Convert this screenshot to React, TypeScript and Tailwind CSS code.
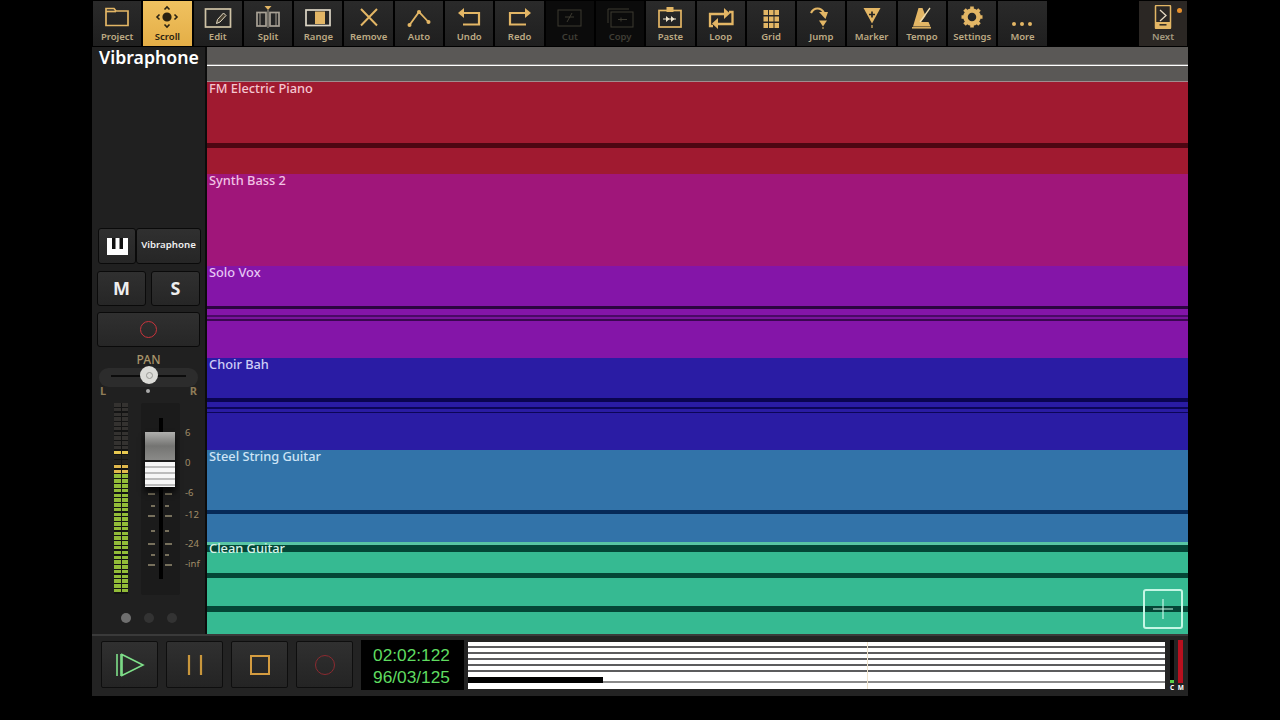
import React from 'react';

const GOLD = '#e3b665';

type Stripe = [number, string];

const tracks: { name: string; text: string; stripes: Stripe[] }[] = [
  {
    name: 'FM Electric Piano',
    text: 'text-[#f4c6d0]',
    stripes: [[61, '#a01a30'], [5, '#4d0612'], [26, '#a01a30']],
  },
  {
    name: 'Synth Bass 2',
    text: 'text-[#f2c2e4]',
    stripes: [[92, '#a0167a']],
  },
  {
    name: 'Solo Vox',
    text: 'text-[#e6c6f4]',
    stripes: [[40, '#8415a8'], [3, '#2c0540'], [6, '#8415a8'], [2, '#4a0a66'], [2, '#7a139c'], [2, '#3a0750'], [37, '#8415a8']],
  },
  {
    name: 'Choir Bah',
    text: 'text-[#cfcdf6]',
    stripes: [[40, '#2a1ca4'], [4, '#0a0450'], [5, '#2a1ca4'], [2, '#0c0658'], [3, '#2a1ca4'], [1, '#0c0658'], [37, '#2a1ca4']],
  },
  {
    name: 'Steel String Guitar',
    text: 'text-[#cde4f6]',
    stripes: [[60, '#3273a9'], [4, '#062a58'], [28, '#3273a9']],
  },
  {
    name: 'Clean Guitar',
    text: 'text-[#d8f4ea]',
    stripes: [[3, '#58c6a4'], [7, '#044636'], [21, '#36ba92'], [5, '#044636'], [28, '#36ba92'], [6, '#044636'], [22, '#36ba92']],
  },
];

function Svg({ children }: { children: React.ReactNode }) {
  return (
    <svg width="28" height="24" viewBox="0 0 28 24" fill="none" stroke={GOLD} strokeWidth="1.7">
      {children}
    </svg>
  );
}

const icons: Record<string, React.ReactNode> = {
  Project: (
    <Svg>
      <path d="M3 3.500h8l2 2.500h12v14.500H3z" />
      <path d="M3 6.500h10" />
    </Svg>
  ),
  Scroll: (
    <svg width="28" height="24" viewBox="0 0 28 24" fill="none" stroke="#2a2312" strokeWidth="1.6">
      <circle cx="14" cy="12" r="3.800" fill="#2a2312" />
      <path d="M11.500 4.500 14 2l2.500 2.500M11.500 19.500 14 22l2.500-2.500M6.500 9.500 4 12l2.500 2.500M21.500 9.500 24 12l-2.500 2.500" />
    </svg>
  ),
  Edit: (
    <Svg>
      <rect x="1.500" y="4" width="25" height="18" stroke="#cfc3a6" />
      <path d="m12.500 18.500 1-4 6-6.500 2.500 2.500-6 6.500z" stroke="#e6dcc4" strokeWidth="1" fill="#4a4232" />
    </Svg>
  ),
  Split: (
    <Svg>
      <path d="M10.500 1h7L14 5z" fill={GOLD} stroke="none" />
      <path d="M14 5v18" stroke="#9a9488" strokeWidth="1.200" />
      <rect x="3" y="7.500" width="9" height="13.500" stroke="#a9a296" />
      <rect x="16" y="7.500" width="9" height="13.500" stroke="#a9a296" />
      <path d="M6 7.500v13.500M22 7.500v13.500" stroke="#a9a296" strokeWidth="1" />
    </Svg>
  ),
  Range: (
    <Svg>
      <rect x="2" y="5" width="24" height="15.500" stroke="#ddd6c6" />
      <rect x="11" y="6.500" width="10" height="12.500" fill={GOLD} stroke="none" />
    </Svg>
  ),
  Remove: (
    <Svg>
      <path d="m6 4 16 16.500M22 4 6 20.500" strokeWidth="2" />
    </Svg>
  ),
  Auto: (
    <Svg>
      <path d="M4.500 20 14 7l9.500 10" strokeWidth="1.800" />
      <circle cx="4.500" cy="20" r="2" fill={GOLD} stroke="none" />
      <circle cx="14" cy="7" r="2" fill={GOLD} stroke="none" />
      <circle cx="23.500" cy="17" r="2" fill={GOLD} stroke="none" />
    </Svg>
  ),
  Undo: (
    <Svg>
      <path d="M9 3 3 8 9 13z" fill={GOLD} stroke="none" />
      <path d="M7 8h17v11.500H8" strokeWidth="2.200" />
    </Svg>
  ),
  Redo: (
    <Svg>
      <path d="m19 3 6 5-6 5z" fill={GOLD} stroke="none" />
      <path d="M21 8H4v11.500h16" strokeWidth="2.200" />
    </Svg>
  ),
  Cut: (
    <svg width="28" height="24" viewBox="0 0 28 24" fill="none" stroke="#3c3a30" strokeWidth="1">
      <rect x="2" y="5" width="23" height="16" />
      <path d="m16 8-5 9M9 12h9" />
    </svg>
  ),
  Copy: (
    <svg width="28" height="24" viewBox="0 0 28 24" fill="none" stroke="#3c3a30" strokeWidth="1">
      <path d="M2 18V4h21" />
      <rect x="5" y="7" width="22" height="15" />
      <path d="M12 14.500h9M15 12.500v4" />
    </svg>
  ),
  Paste: (
    <Svg>
      <rect x="3" y="5.500" width="22" height="16.500" />
      <rect x="10.500" y="2" width="7" height="5" fill={GOLD} stroke="none" />
      <path d="M7 14h13" strokeWidth="1" stroke="#f0e4cc" />
      <path d="m10 11 3.500 3L10 17zM15 11l3.500 3-3.500 3z" fill="#f0e4cc" stroke="none" />
    </Svg>
  ),
  Loop: (
    <Svg>
      <path d="M6 21H3V9h15" strokeWidth="2.300" />
      <path d="M22 7h3.500v12H9" strokeWidth="2.300" />
      <path d="m17 3 6 5.500-6 5.500zM11 13l-6 5.500 6 5.500z" fill={GOLD} stroke="none" />
    </Svg>
  ),
  Grid: (
    <svg width="28" height="24" viewBox="0 0 28 24" fill={GOLD}>
      {[5, 11.500, 18].map((y) =>
        [6.500, 12, 17.500].map((x) => <rect key={`${x}-${y}`} x={x} y={y} width="4.500" height="5" />),
      )}
    </svg>
  ),
  Jump: (
    <Svg>
      <path d="M4 8c3-6 10-6 13 0" strokeWidth="2.200" />
      <path d="m12 7 9 0-2.500 7z" fill={GOLD} stroke="none" />
      <path d="M12 15.500h8L16 21.500z" fill={GOLD} stroke="none" />
      <path d="M16 22v2" strokeWidth="1" />
    </Svg>
  ),
  Marker: (
    <Svg>
      <path d="M5.500 3h17L14 18.500z" fill={GOLD} stroke="none" />
      <path d="M14 6.500v6M11 9.500h6" stroke="#242424" strokeWidth="1.700" />
      <path d="M14 20v3" strokeWidth="1.200" />
    </Svg>
  ),
  Tempo: (
    <Svg>
      <path d="M5 21.500 10.500 3h4l3 8-4.500 6h7.500l2 4.500z" fill={GOLD} stroke="none" />
      <path d="m12 17 10-14" strokeWidth="1.300" stroke="#f0dcae" />
      <path d="M4 22.800h19" strokeWidth="1.500" />
    </Svg>
  ),
  Settings: (
    <Svg>
      <circle cx="14" cy="12" r="6.500" stroke={GOLD} strokeWidth="4.500" />
      <path
        d="M14 1.500v4M14 18.500v4M3.500 12h4M20.500 12h4M6.500 4.500l3 3M18.500 16.500l3 3M21.500 4.500l-3 3M9.500 16.500l-3 3"
        strokeWidth="3.600"
      />
    </Svg>
  ),
  More: (
    <svg width="28" height="24" viewBox="0 0 28 24" fill={GOLD}>
      <circle cx="6" cy="19" r="2" />
      <circle cx="14" cy="19" r="2" />
      <circle cx="22" cy="19" r="2" />
    </svg>
  ),
  Next: (
    <svg width="28" height="24" viewBox="0 0 28 24" fill="none" stroke={GOLD} strokeWidth="1.500">
      <rect x="6.500" y="0.500" width="15" height="23" rx="1" />
      <rect x="6.500" y="17" width="15" height="6.500" fill={GOLD} stroke="none" />
      <path d="M10.500 19.800h7" stroke="#2a2622" strokeWidth="1.500" />
      <path d="m11 5 6 5.500-6 5.500" stroke="#e6d9c2" strokeWidth="1.300" />
    </svg>
  ),
};

function ToolButton({ label, active, off }: { label: string; active?: boolean; off?: boolean }) {
  const look = active
    ? 'bg-gradient-to-b from-[#f0c260] to-[#e4ae46] text-[#2a2312]'
    : off
      ? 'bg-[#0b0b0b] text-[#3f3d35]'
      : 'bg-gradient-to-b from-[#2a2a2a] to-[#1f1f1f] text-[#bdaa84]';
  return (
    <div className={`flex h-[45px] w-[48.300px] shrink-0 flex-col items-center pt-[4px] ${look}`}>
      {icons[label]}
      <span className="mt-[1px] text-[9.500px] leading-[14px] font-semibold">{label}</span>
    </div>
  );
}

function Toolbar() {
  const names = ['Project', 'Scroll', 'Edit', 'Split', 'Range', 'Remove', 'Auto', 'Undo', 'Redo', 'Cut', 'Copy', 'Paste', 'Loop', 'Grid', 'Jump', 'Marker', 'Tempo', 'Settings', 'More'];
  return (
    <div className="flex h-[47px] shrink-0 bg-black pt-[1px] pl-[1px]">
      <div className="flex gap-[2px]">
        {names.map((n) => (
          <ToolButton key={n} label={n} active={n === 'Scroll'} off={n === 'Cut' || n === 'Copy'} />
        ))}
      </div>
      <div className="relative ml-auto mr-[1px] flex h-[45px] w-[48px] flex-col items-center bg-[#2b2724] pt-[4px] text-[#a59a80]">
        {icons.Next}
        <span className="mt-[1px] text-[9.500px] leading-[14px] font-semibold">Next</span>
        <span className="absolute top-[7px] right-[5px] h-[5px] w-[5px] rounded-full bg-[#e8902c]" />
      </div>
    </div>
  );
}

function SideButton({ children, className }: { children: React.ReactNode; className: string }) {
  return (
    <div className={`flex items-center justify-center rounded-[3px] border-[1.500px] border-[#0a0a0a] bg-gradient-to-b from-[#303030] to-[#262626] ${className}`}>
      {children}
    </div>
  );
}

function Meter() {
  const color = (i: number) => {
    if (i < 10) return 'bg-[#343230]';
    if (i === 10) return 'bg-[#e8c850]';
    if (i < 13) return 'bg-[#242320]';
    if (i < 15) return 'bg-[#e0b84c]';
    return 'bg-[#92bc38]';
  };
  return (
    <div className="flex h-[191px] w-[14px] gap-[1px] bg-[#141414]">
      {[0, 1].map((c) => (
        <div key={c} className="flex w-[6.500px] flex-col gap-[1.270px]">
          {Array.from({ length: 40 }).map((_, i) => (
            <div key={i} className={`h-[3.500px] ${color(i)}`} />
          ))}
        </div>
      ))}
    </div>
  );
}

function Fader() {
  const ticks = [
    { y: 90, w: 7 },
    { y: 102, w: 4 },
    { y: 112, w: 7 },
    { y: 127, w: 4 },
    { y: 140, w: 7 },
    { y: 151, w: 4 },
    { y: 161, w: 7 },
  ];
  return (
    <div className="relative h-[192px] w-[39px] rounded-[2px] bg-[#1b1b1b]">
      <div className="absolute top-[15px] left-[18px] h-[161px] w-[4px] bg-black" />
      {ticks.map((t) => (
        <React.Fragment key={t.y}>
          <div className="absolute h-[1.500px] bg-[#77705c]" style={{ top: t.y, right: 25, width: t.w }} />
          <div className="absolute h-[1.500px] bg-[#77705c]" style={{ top: t.y, left: 24, width: t.w }} />
        </React.Fragment>
      ))}
      <div className="absolute top-[29px] left-[4px] flex h-[55px] w-[30px] flex-col shadow-[0_5px_6px_rgba(0,0,0,0.8)]">
        <div className="h-[28px] bg-gradient-to-b from-[#b0b0ae] via-[#747472] to-[#8a8a88]" />
        <div className="h-[2px] bg-[#1c1c1c]" />
        <div className="h-[25px] bg-[repeating-linear-gradient(180deg,#f6f6f6_0px,#f6f6f6_4px,#bcbcbc_4px,#bcbcbc_6px)]" />
      </div>
    </div>
  );
}

function Sidebar() {
  const scale = [
    { t: '6', y: 433 },
    { t: '0', y: 463 },
    { t: '-6', y: 493 },
    { t: '-12', y: 515 },
    { t: '-24', y: 544 },
    { t: '-inf', y: 564 },
  ];
  return (
    <div className="flex w-[113px] shrink-0 flex-col bg-[#202020]">
      <div className="h-[181px] pl-[7px] text-[17.700px] leading-[21px] font-semibold text-white">Vibraphone</div>
      <div className="ml-[6px] flex h-[36px] w-[103px]">
        <SideButton className="w-[38px]">
          <svg width="21" height="17" viewBox="0 0 21 17">
            <rect width="21" height="17" fill="#fff" />
            <path d="M5 0h3.500v11H5zM12.500 0H16v11h-3.500z" fill="#111" />
          </svg>
        </SideButton>
        <SideButton className="flex-1">
          <span className="mb-[2px] text-[9.700px] font-semibold text-[#efefef]">Vibraphone</span>
        </SideButton>
      </div>
      <div className="mt-[7px] ml-[5px] flex h-[35px] w-[103px] justify-between">
        <SideButton className="w-[49px]">
          <span className="text-[18px] font-bold text-[#eeeeee]">M</span>
        </SideButton>
        <SideButton className="w-[49px]">
          <span className="text-[18px] font-bold text-[#eeeeee]">S</span>
        </SideButton>
      </div>
      <SideButton className="mt-[6px] ml-[5px] h-[35px] w-[103px]">
        <span className="h-[17px] w-[17px] rounded-full border-[1.500px] border-[#c9343c]" />
      </SideButton>
      <div className="mt-[5px] text-center text-[12px] leading-[16px] font-medium text-[#a8946a]">PAN</div>
      <div className="relative mx-[7px] flex h-[19px] items-center rounded-full bg-[#2c2c2c] px-[12px] pb-[3px]">
        <div className="h-[2px] w-full bg-[#0c0c0c]" />
        <div className="absolute top-[-2px] left-[41px] flex h-[18px] w-[18px] items-center justify-center rounded-full bg-[#dcdcd8]">
          <span className="h-[7px] w-[7px] rounded-full border border-[#9a9a96]" />
        </div>
      </div>
      <div className="flex h-[8px] items-center justify-between px-[8px] text-[11px] font-bold text-[#8e7c58]">
        <span>L</span>
        <span className="h-[4px] w-[4px] rounded-full bg-[#aaaaaa]" />
        <span>R</span>
      </div>
      <div className="mt-[8px] flex pl-[22px]">
        <Meter />
        <div className="ml-[13px]">
          <Fader />
        </div>
        <div className="relative ml-[4px] h-[192px] flex-1 text-[9.500px] text-[#a08e68]">
          {scale.map((s) => (
            <span key={s.t} className="absolute left-[1px] leading-[12px]" style={{ top: s.y - 403 - 6 }}>
              {s.t}
            </span>
          ))}
        </div>
      </div>
      <div className="mt-[18px] flex justify-center gap-[13px]">
        <span className="h-[10px] w-[10px] rounded-full bg-[#6f6f6f]" />
        <span className="h-[10px] w-[10px] rounded-full bg-[#333333]" />
        <span className="h-[10px] w-[10px] rounded-full bg-[#333333]" />
      </div>
    </div>
  );
}

function Arrange() {
  return (
    <div className="relative flex flex-1 flex-col bg-[#5a5856]">
      <div className="flex h-[35px] shrink-0 flex-col">
        <div className="h-[17px]" />
        <div className="h-[1px] bg-[#8a8886]" />
        <div className="h-[1px] bg-white" />
        <div className="h-[15px]" />
        <div className="h-[1px] bg-[#a08c90]" />
      </div>
      {tracks.map((t) => (
        <div key={t.name} className="relative flex h-[92px] shrink-0 flex-col">
          {t.stripes.map((s, i) => (
            <div key={i} className="shrink-0" style={{ height: s[0], backgroundColor: s[1] }} />
          ))}
          <span className={`absolute top-[-2px] left-[2px] text-[12.800px] leading-[16px] font-medium ${t.text}`}>{t.name}</span>
        </div>
      ))}
      <div className="absolute right-[5px] bottom-[5px] flex h-[40px] w-[40px] items-center justify-center rounded-[3px] border-2 border-[#c4f6e4]">
        <svg width="20" height="20" viewBox="0 0 20 20" stroke="#c4f6e4" strokeWidth="1.200">
          <path d="M10 0v20M0 10h20" />
        </svg>
      </div>
    </div>
  );
}

function TransportButton({ children }: { children: React.ReactNode }) {
  return (
    <div className="flex h-[47px] w-[57px] shrink-0 items-center justify-center rounded-[2px] border-[1.500px] border-[#0e0e0e] bg-gradient-to-b from-[#303030] to-[#242424]">
      {children}
    </div>
  );
}

function Overview() {
  return (
    <div className="relative mt-[6px] ml-[4px] flex h-[47px] w-[697px] flex-col bg-white">
      {[0, 1, 2, 3, 4].map((i) => (
        <div key={i} className="flex h-[6px] flex-col justify-end">
          <div className="h-[2px] bg-[#5c5c5e]" />
        </div>
      ))}
      <div className="mt-[5px] flex h-[6px]">
        <div className="h-full w-[135px] bg-black" />
        <div className="flex flex-1 flex-col justify-end">
          <div className="h-[2px] bg-[#8a8a8a]" />
        </div>
      </div>
      <div className="absolute top-0 left-[399px] h-full w-[1px] bg-[#f0e4cc]" />
    </div>
  );
}

function Transport() {
  return (
    <div className="flex h-[62px] shrink-0 items-start border-t-2 border-[#3a3a3a] bg-[#232323] pl-[9px]">
      <div className="mt-[5px] flex gap-[8px]">
        <TransportButton>
          <svg width="30" height="24" viewBox="0 0 30 24" fill="none" stroke="#7fe08a" strokeWidth="1.600">
            <path d="M2 1v22" />
            <path d="M6 1v22" />
            <path d="M7 1.500 28 12 7 22.500z" />
          </svg>
        </TransportButton>
        <TransportButton>
          <svg width="18" height="20" viewBox="0 0 18 20" stroke="#c8963c" strokeWidth="2.200">
            <path d="M3 0v20M15 0v20" />
          </svg>
        </TransportButton>
        <TransportButton>
          <span className="h-[20px] w-[20px] border-2 border-[#d49c40]" />
        </TransportButton>
        <TransportButton>
          <span className="h-[20px] w-[20px] rounded-full border-[1.500px] border-[#8c2a30]" />
        </TransportButton>
      </div>
      <div className="mt-[4px] ml-[8px] flex h-[50px] w-[103px] flex-col items-center justify-center bg-black pt-[2px] pr-[2px] font-['Liberation_Sans',Arial,sans-serif] text-[17.300px] leading-[22px] text-[#5fdc60]">
        <span>02:02:122</span>
        <span>96/03/125</span>
      </div>
      <Overview />
      <div className="mt-[4px] ml-[5px] flex w-[14px] justify-between">
        <div className="flex flex-col items-center">
          <div className="flex h-[43px] w-[4px] flex-col justify-end bg-black">
            <div className="h-[3px] bg-[#58d048]" />
          </div>
          <span className="text-[6.500px] leading-[10px] font-bold text-white">C</span>
        </div>
        <div className="flex flex-col items-center">
          <div className="h-[43px] w-[5px] bg-[#b8101e]" />
          <span className="text-[6.500px] leading-[10px] font-bold text-white">M</span>
        </div>
      </div>
    </div>
  );
}

export default function App() {
  return (
    <div className="flex h-[720px] w-[1280px] justify-center bg-black font-['Noto_Sans','Open_Sans',sans-serif]">
      <div className="flex h-[696px] w-[1096px] flex-col">
        <Toolbar />
        <div className="flex h-[587px] shrink-0">
          <Sidebar />
          <div className="w-[2px] shrink-0 bg-[#0c0c0c]" />
          <Arrange />
        </div>
        <Transport />
      </div>
    </div>
  );
}
